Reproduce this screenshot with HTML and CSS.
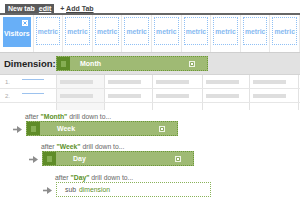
FILE: index.html
```
<!DOCTYPE html>
<html lang="en">
<head>
    <meta charset="UTF-8">
    <title>Drill Down</title>
    <link rel="stylesheet" href="styles.css">
</head>
<body>
    <div class="tabs">
        <div class="tab">New tab <span class="tab-edit">edit</span></div>
        <div class="add-tab">+ <span class="add-link">Add Tab</span></div>
    </div>

    <div class="metrics">
        <div class="cell">
            <div class="metric selected">
                <svg class="metric-close" width="6" height="6" viewBox="0 0 6 6"><rect x="0.5" y="0.5" width="5" height="5" fill="#fff" stroke="#fff"/><path d="M1.5 1.5L4.5 4.5M4.5 1.5L1.5 4.5" stroke="#66aef7" stroke-width="1"/></svg>
                Visitors
            </div>
        </div>
        <div class="cell"><div class="metric">metric</div></div>
        <div class="cell"><div class="metric">metric</div></div>
        <div class="cell"><div class="metric">metric</div></div>
        <div class="cell"><div class="metric">metric</div></div>
        <div class="cell"><div class="metric">metric</div></div>
        <div class="cell"><div class="metric">metric</div></div>
        <div class="cell"><div class="metric">metric</div></div>
        <div class="cell"><div class="metric">metric</div></div>
        <div class="cell"><div class="metric">metric</div></div>
    </div>

    <div class="dimbar">
        <span class="dim-label">Dimension:</span>
        <div class="chip chip-month">
            <div class="chip-handle"><div class="grip"></div></div>
            <span class="chip-name">Month</span>
            <svg class="chip-close" width="6" height="6" viewBox="0 0 6 6"><rect x="0.5" y="0.5" width="5" height="5" fill="#8daa5f" stroke="#eef4e4"/><path d="M1.8 1.8L4.2 4.2M4.2 1.8L1.8 4.2" stroke="#fff" stroke-width="1"/></svg>
        </div>
    </div>

    <div class="table">
        <div class="row">
            <div class="num">1.</div>
            <div class="name"><span class="link"></span></div>
            <div class="col sorted"><span class="bar"></span></div>
            <div class="col"><span class="bar"></span></div>
            <div class="col"><span class="bar"></span></div>
            <div class="col"><span class="bar"></span></div>
            <div class="col"><span class="bar"></span></div>
            <div class="rest"></div>
        </div>
        <div class="row">
            <div class="num">2.</div>
            <div class="name"><span class="link"></span></div>
            <div class="col sorted"><span class="bar"></span></div>
            <div class="col"><span class="bar"></span></div>
            <div class="col"><span class="bar"></span></div>
            <div class="col"><span class="bar"></span></div>
            <div class="col"><span class="bar"></span></div>
            <div class="rest"></div>
        </div>
        <div class="row row-short">
            <div class="num"></div>
            <div class="name"></div>
            <div class="col sorted"></div>
            <div class="col"></div>
            <div class="col"></div>
            <div class="col"></div>
            <div class="col"></div>
            <div class="rest"></div>
        </div>
    </div>

    <div class="drill">
        <div class="step step-1">
            <div class="after">after <b>"Month"</b> drill down to...</div>
            <div class="step-row">
                <svg class="arrow" width="9" height="7" viewBox="0 0 9 7"><path d="M0 3.5H5" stroke="#8c8c8c" stroke-width="1.6"/><path d="M4 0L9 3.5L4 7Z" fill="#8c8c8c"/></svg>
                <div class="chip">
                    <div class="chip-handle"><div class="grip"></div></div>
                    <span class="chip-name">Week</span>
                    <svg class="chip-close" width="6" height="6" viewBox="0 0 6 6"><rect x="0.5" y="0.5" width="5" height="5" fill="#8daa5f" stroke="#eef4e4"/><path d="M1.8 1.8L4.2 4.2M4.2 1.8L1.8 4.2" stroke="#fff" stroke-width="1"/></svg>
                </div>
            </div>
        </div>
        <div class="step step-2">
            <div class="after">after <b>"Week"</b> drill down to...</div>
            <div class="step-row">
                <svg class="arrow" width="9" height="7" viewBox="0 0 9 7"><path d="M0 3.5H5" stroke="#8c8c8c" stroke-width="1.6"/><path d="M4 0L9 3.5L4 7Z" fill="#8c8c8c"/></svg>
                <div class="chip">
                    <div class="chip-handle"><div class="grip"></div></div>
                    <span class="chip-name">Day</span>
                    <svg class="chip-close" width="6" height="6" viewBox="0 0 6 6"><rect x="0.5" y="0.5" width="5" height="5" fill="#8daa5f" stroke="#eef4e4"/><path d="M1.8 1.8L4.2 4.2M4.2 1.8L1.8 4.2" stroke="#fff" stroke-width="1"/></svg>
                </div>
            </div>
        </div>
        <div class="step step-3">
            <div class="after">after <b>"Day"</b> drill down to...</div>
            <div class="step-row">
                <svg class="arrow" width="9" height="7" viewBox="0 0 9 7"><path d="M0 3.5H5" stroke="#8c8c8c" stroke-width="1.6"/><path d="M4 0L9 3.5L4 7Z" fill="#8c8c8c"/></svg>
                <div class="sub-box">sub <span class="sub-green">dimension</span></div>
            </div>
        </div>
    </div>
</body>
</html>
```

FILE: styles.css
```
body {
    margin: 0;
    width: 300px;
    height: 200px;
    overflow: hidden;
    background-color: #fff;
    font-family: "Liberation Sans", Arial, sans-serif;
    color: #333;
}

.tabs {
    display: flex;
    align-items: flex-end;
    height: 13px;
    padding-left: 5px;
    border-bottom: 2px solid #666;
}

.tab {
    display: flex;
    align-items: center;
    gap: 4px;
    height: 9px;
    padding: 0 3px 0 3px;
    background-color: #5a5a5a;
    color: #fff;
    font-size: 7px;
    font-weight: bold;
}

.tab-edit {
    text-decoration: underline;
}

.add-tab {
    height: 9px;
    margin-left: 6px;
    font-size: 7px;
    font-weight: bold;
    color: #444;
    line-height: 9px;
}

.add-link {
    text-decoration: underline;
}

.metrics {
    display: flex;
    height: 37px;
}

.cell {
    flex: 1;
    padding: 2px 2px 0 2px;
    border-right: 1px solid #e8e8e8;
}

.cell:first-child {
    padding-left: 3px;
}

.metric {
    position: relative;
    display: flex;
    align-items: center;
    justify-content: center;
    height: 28px;
    border: 1px dotted #8fc0f5;
    color: #86b9f1;
    font-size: 6.8px;
    font-weight: bold;
    box-sizing: border-box;
}

.metric.selected {
    height: 30px;
    padding-top: 3px;
    background-color: #68aff7;
    border: 1px solid #68aff7;
    color: #fff;
    font-size: 7px;
}

.metric-close {
    position: absolute;
    top: 2px;
    right: 2px;
}

.dimbar {
    display: flex;
    align-items: center;
    height: 21px;
    padding-left: 4px;
    background-color: #e2e2e2;
    border-top: 1px solid #cfcfcf;
    border-bottom: 1px solid #d4d4d4;
}

.dim-label {
    width: 52px;
    font-size: 9.5px;
    font-weight: bold;
    color: #222;
}

.chip {
    display: flex;
    align-items: center;
    width: 152px;
    height: 15px;
    background-color: #9fba74;
    border: 1px dotted #6c9838;
    box-sizing: border-box;
}

.chip-handle {
    display: flex;
    align-items: center;
    justify-content: center;
    width: 13px;
    height: 100%;
    background-color: #5f8c28;
}

.grip {
    width: 5px;
    height: 6px;
    background-color: #86ae53;
}

.chip-name {
    flex: 1;
    padding-left: 17px;
    color: #fff;
    font-size: 7px;
    font-weight: bold;
}

.chip-month .chip-name {
    padding-left: 10px;
}

.chip-close {
    margin-right: 12px;
}

.table .row {
    display: grid;
    grid-template-columns: 14px 42px 48px 48px 50px 47px 49px 1fr;
    height: 13px;
    border-bottom: 1px solid #e6e6e6;
}

.table .row-short {
    height: 7px;
    border-bottom: none;
}

.num {
    padding: 4px 0 0 5px;
    font-size: 6px;
    color: #aaa;
}

.name {
    padding: 4px 0 0 8px;
}

.link {
    display: block;
    width: 22px;
    height: 1px;
    background-color: #9cc2ee;
}

.col {
    display: flex;
    align-items: center;
    padding-left: 3px;
    border-left: 1px solid #e2e2e2;
}

.col.sorted {
    background-color: #f6f6f6;
}

.rest {
    border-left: 1px solid #e2e2e2;
}

.bar {
    width: 33px;
    height: 4px;
    background-color: #dedede;
}

.drill {
    padding-top: 2px;
}

.step {
    margin-bottom: 6px;
}

.step-2 {
    margin-bottom: 7px;
}

.step-1 {
    margin-left: 13px;
}

.step-2 {
    margin-left: 29px;
}

.step-3 {
    margin-left: 43px;
}

.after {
    height: 9px;
    padding-left: 12px;
    font-size: 6.8px;
    line-height: 9px;
    color: #666;
}

.after b {
    color: #5c9128;
}

.step-row {
    display: flex;
    align-items: center;
}

.arrow {
    margin-right: 4px;
    margin-top: 2px;
}

.sub-box {
    display: flex;
    align-items: center;
    width: 155px;
    height: 15px;
    padding-left: 8px;
    border: 1px dotted #8ab35a;
    box-sizing: border-box;
    font-size: 6.8px;
    color: #555;
}

.sub-green {
    margin-left: 3px;
    color: #5d8f2a;
}
```
